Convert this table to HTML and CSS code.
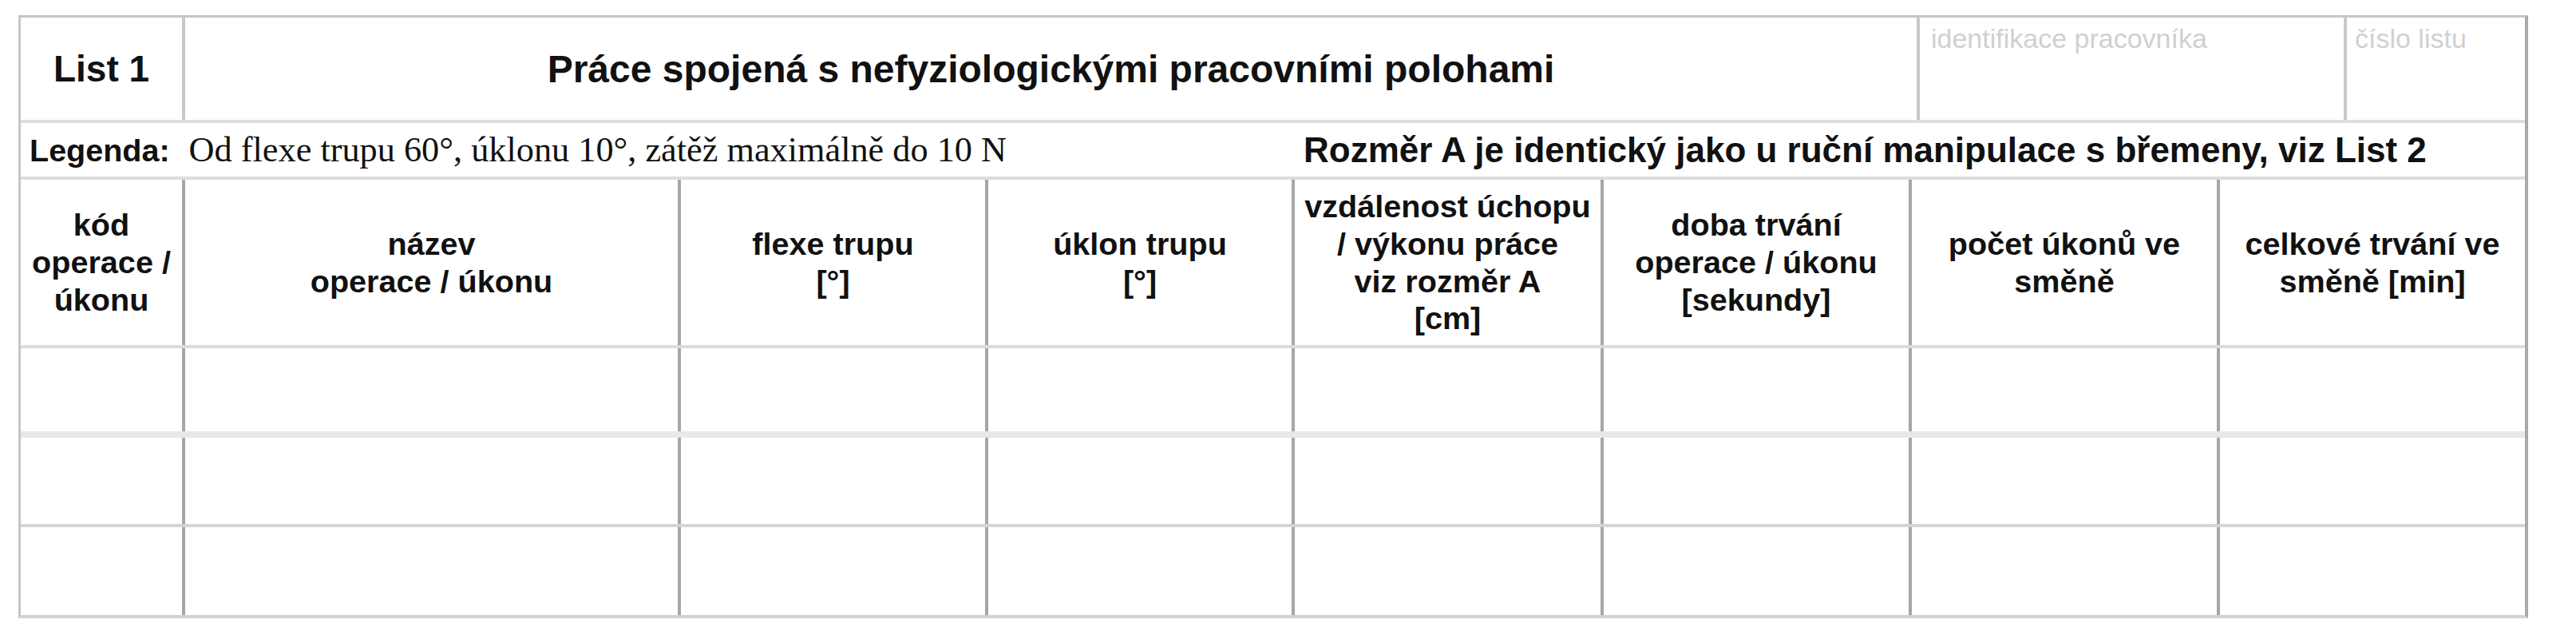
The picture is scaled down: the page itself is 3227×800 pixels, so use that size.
FILE: index.html
```html
<!DOCTYPE html>
<html lang="cs">
<head>
<meta charset="utf-8">
<title>List 1 – Práce spojená s nefyziologickými pracovními polohami</title>
<link rel="stylesheet" href="styles.css">
</head>
<body>
<div class="sheet">
  <div class="row row-title">
    <div class="cell list-no">List 1</div>
    <div class="cell title">Práce spojená s nefyziologickými pracovními polohami</div>
    <div class="cell field">identifikace pracovníka</div>
    <div class="cell field last">číslo listu</div>
  </div>
  <div class="row row-legend">
    <div class="legend-left"><span class="legend-label">Legenda:</span><span class="legend-text">Od flexe trupu 60°, úklonu 10°, zátěž maximálně do 10 N</span></div>
    <div class="legend-right">Rozměr A je identický jako u ruční manipulace s břemeny, viz List 2</div>
  </div>
  <div class="row grid8 row-head">
    <div class="cell head">kód operace / úkonu</div>
    <div class="cell head">název<br>operace / úkonu</div>
    <div class="cell head">flexe trupu<br>[°]</div>
    <div class="cell head">úklon trupu<br>[°]</div>
    <div class="cell head">vzdálenost úchopu<br>/ výkonu práce<br>viz rozměr A<br>[cm]</div>
    <div class="cell head">doba trvání<br>operace / úkonu<br>[sekundy]</div>
    <div class="cell head">počet úkonů ve<br>směně</div>
    <div class="cell head last">celkové trvání ve<br>směně [min]</div>
  </div>
  <div class="row grid8 row-data row-thick">
    <div class="cell"></div><div class="cell"></div><div class="cell"></div><div class="cell"></div>
    <div class="cell"></div><div class="cell"></div><div class="cell"></div><div class="cell last"></div>
  </div>
  <div class="row grid8 row-data">
    <div class="cell"></div><div class="cell"></div><div class="cell"></div><div class="cell"></div>
    <div class="cell"></div><div class="cell"></div><div class="cell"></div><div class="cell last"></div>
  </div>
  <div class="row grid8 row-data row-end">
    <div class="cell"></div><div class="cell"></div><div class="cell"></div><div class="cell"></div>
    <div class="cell"></div><div class="cell"></div><div class="cell"></div><div class="cell last"></div>
  </div>
</div>
</body>
</html>
```

FILE: styles.css
```css
html, body {
  margin: 0;
  padding: 0;
  background: #ffffff;
}

body {
  font-family: "Liberation Sans", Arial, sans-serif;
  color: #111111;
}

.sheet {
  margin: 19px 0 0 23px;
  width: 3144px;
  border: 3px solid #c6c6c6;
  border-right: 4px solid #a9a9a9;
  border-bottom: 4px solid #d2d2d2;
  box-sizing: border-box;
}

.row {
  display: grid;
  box-sizing: border-box;
  border-bottom: 4px solid #dcdcdc;
}

.row-end {
  border-bottom: none;
}

.cell {
  box-sizing: border-box;
  border-right: 4px solid #b4b4b4;
}

.cell.last {
  border-right: none;
}

/* title row */
.row-title {
  grid-template-columns: 206px 2173px 535px 223px;
  height: 132px;
  border-bottom-color: #dedede;
}

.row-title .cell {
  border-right-color: #c8c8c8;
}

.list-no,
.title {
  display: flex;
  align-items: center;
  justify-content: center;
  font-weight: bold;
}

.list-no {
  font-size: 46px;
}

.title {
  font-size: 48px;
}

.field {
  padding: 7px 14px;
  font-size: 34px;
  color: #d0d0d0;
  line-height: 1.15;
}

.field.last {
  padding-left: 10px;
}

/* legend row */
.row-legend {
  grid-template-columns: 1596px 1541px;
  height: 71px;
  align-items: center;
  border-bottom-color: #dddddd;
}

.legend-left,
.legend-right {
  padding-left: 11px;
  white-space: nowrap;
}

.legend-label {
  font-weight: bold;
  font-size: 39.5px;
  margin-right: 24px;
}

.legend-text {
  font-family: "Liberation Serif", "Times New Roman", serif;
  font-size: 44.3px;
}

.legend-right {
  font-weight: bold;
  font-size: 44px;
}

/* table grid */
.grid8 {
  grid-template-columns: 206px 621px 385px 384px 387px 386px 386px 382px;
}

.row-head {
  height: 211px;
  border-bottom-color: #dcdcdc;
}

.row-head .cell,
.row-data .cell {
  border-right-color: #a6a6a6;
}

.head {
  display: flex;
  align-items: center;
  justify-content: center;
  text-align: center;
  font-weight: bold;
  font-size: 39.6px;
  line-height: 1.18;
  padding: 0 2px;
}

.row-data {
  height: 112px;
  border-bottom-color: #d4d4d4;
}

.row-thick {
  border-bottom: 8px solid #e8e8e8;
}

.row-end {
  height: 110px;
}
```
